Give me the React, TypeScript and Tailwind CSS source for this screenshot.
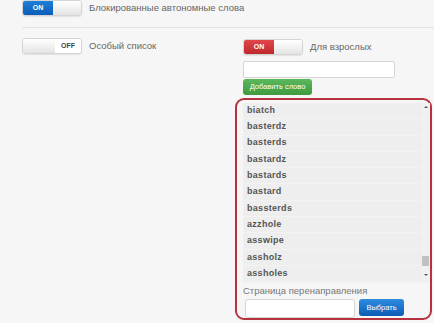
const WORDS = [
  'biatch',
  'basterdz',
  'basterds',
  'bastardz',
  'bastards',
  'bastard',
  'bassterds',
  'azzhole',
  'asswipe',
  'assholz',
  'assholes',
]

function Toggle({ on, color }: { on: boolean; color?: 'blue' | 'red' }) {
  const fill =
    color === 'red'
      ? 'bg-gradient-to-b from-[#e0464a] to-[#c0282c] text-white'
      : 'bg-gradient-to-b from-[#1f7fd8] to-[#0a5db8] text-white'
  const knob = 'bg-gradient-to-b from-[#ffffff] to-[#e4e4e4]'
  return (
    <div className="flex h-4 w-[60px] overflow-hidden rounded-[3px] border border-[#d4d4d4] text-[7px] font-bold shadow-[0_1px_1px_rgba(0,0,0,0.08)]">
      {on ? (
        <>
          <div className={`flex w-[30px] items-center justify-center ${fill}`}>ON</div>
          <div className={`flex-1 ${knob}`} />
        </>
      ) : (
        <>
          <div className={`w-[32px] ${knob}`} />
          <div className="flex flex-1 items-center justify-center bg-white text-[#444]">OFF</div>
        </>
      )}
    </div>
  )
}

export default function App() {
  return (
    <div
      className="h-[323px] w-[434px] overflow-hidden bg-[#f6f6f6] pl-[22px] text-[#666]"
      style={{ fontFamily: '"Liberation Sans", Arial, sans-serif' }}
    >
      {/* Top row */}
      <div className="flex h-4 items-center gap-[7px]">
        <Toggle on color="blue" />
        <span className="text-[9.5px]">Блокированные автономные слова</span>
      </div>

      <div className="mt-[11px] h-px bg-[#e3e3e3]" />

      <div className="mt-[10px] flex">
        {/* Left column */}
        <div className="flex h-4 w-[221px] items-center gap-[7px]">
          <Toggle on={false} />
          <span className="text-[9.5px]">Особый список</span>
        </div>

        {/* Right column */}
        <div className="flex flex-col">
          <div className="mt-px flex h-4 items-center gap-[7px]">
            <Toggle on color="red" />
            <span className="text-[9.5px]">Для взрослых</span>
          </div>

          <div className="mt-[6px] h-[17px] w-[152px] rounded-[2px] border border-[#d6d6d6] bg-white" />

          <button className="mt-px flex h-4 w-[69px] items-center justify-center rounded-[3px] bg-gradient-to-b from-[#5cb85c] to-[#3e9a3e] text-[7.5px] text-white">
            Добавить слово
          </button>

          {/* Red bordered panel */}
          <div className="ml-[-8px] mt-[3px] flex h-[222px] w-[197px] flex-col rounded-[9px] border-2 border-[#b5323f] pl-[6px]">
            <div className="relative mt-[3px] h-[180px] bg-[#eeeeee]">
              {WORDS.map(w => (
                <div
                  key={w}
                  className="flex h-[16.3px] items-center border-b border-[#f3f3f3] pl-[4px] text-[9px] font-bold tracking-[0.3px] text-[#555]"
                >
                  {w}
                </div>
              ))}
              {/* scrollbar */}
              <div className="absolute right-0 top-0 flex h-full w-[9px] flex-col items-center bg-[#f1f1f1]">
                <div className="mt-[3px] h-0 w-0 border-x-[2px] border-b-[2px] border-x-transparent border-b-[#555]" />
                <div className="mt-[148px] h-[10px] w-[7px] bg-[#c1c1c1]" />
                <div className="mt-[8px] h-0 w-0 border-x-[2px] border-t-[2px] border-x-transparent border-t-[#555]" />
              </div>
            </div>

            <div className="mt-px text-[9.5px] text-[#777]">Страница перенаправления</div>
            <div className="mt-px flex items-start gap-[4px] pl-[2px]">
              <div className="h-[19px] w-[110px] rounded-[3px] border border-[#d6d6d6] bg-white" />
              <button className="flex h-[17px] w-[45px] items-center justify-center rounded-[3px] bg-gradient-to-b from-[#2d8ce0] to-[#0b5cb5] text-[7.5px] text-white">
                Выбрать
              </button>
            </div>
          </div>
        </div>
      </div>
    </div>
  )
}
